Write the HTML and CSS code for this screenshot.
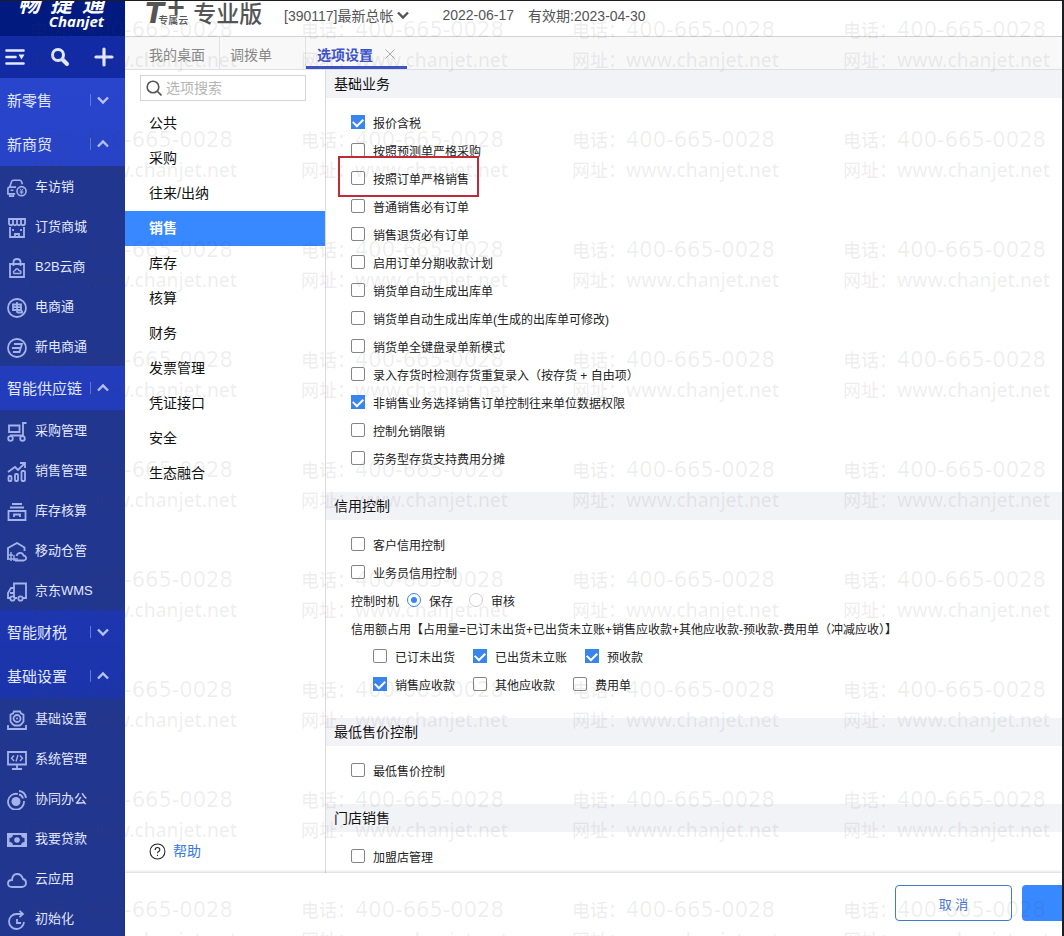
FILE: index.html
```html
<!DOCTYPE html>
<html lang="zh-CN">
<head>
<meta charset="utf-8">
<meta name="viewport" content="width=device-width, initial-scale=1">
<title>选项设置</title>
<link rel="stylesheet" href="styles.css">
<script src="watermark.js" defer></script>
</head>
<body>
<div class="app">
  <aside class="sidebar">
    <div class="brand">
      <div class="brand-cn"><span>畅</span><span>捷</span><span>通</span></div>
      <div class="brand-en">Chanjet</div>
    </div>
    <div class="tools">
      <button type="button" aria-label="菜单"><svg viewBox="0 0 20 20"><path d="M1.5 3.500h17M1.500 10h9M1.500 16.500h17" class="thick"/><path d="M13.500 7.500h6l-3 5z" class="solid"/></svg></button>
      <button type="button" aria-label="搜索"><svg viewBox="0 0 20 20"><circle cx="8" cy="8" r="5.500" stroke-width="3"/><path d="M12.500 12.500l4.500 4.500" stroke-width="4"/></svg></button>
      <button type="button" aria-label="新增"><svg viewBox="0 0 20 20"><path d="M10 2v16M2 10h16" stroke-width="3.200"/></svg></button>
    </div>
    <nav class="nav">
      <button type="button" class="group"><span>新零售</span><svg class="chev" viewBox="0 0 12 12"><path d="M1 3.500l5 5 5-5"/></svg></button>
      <button type="button" class="group"><span>新商贸</span><svg class="chev" viewBox="0 0 12 12"><path d="M1 8.500l5-5 5 5"/></svg></button>
      <div class="items">
        <a href="#"><svg viewBox="0 0 22 20"><path d="M3 9l2-6q.4-1.500 2-1.500h7q1.500 0 2 1.500l1 3M10 9H3Q1 9 1 11v5.500h8M3 16.500V19h4v-2.500M4 12.500h3"/><circle cx="16" cy="13.500" r="5"/><path d="M14 10.500l2 2.500 2-2.500M16 13v4M14 13.500h4M14 15.200h4" class="thin"/></svg><span>车访销</span></a>
        <a href="#"><svg viewBox="0 0 20 20"><path d="M2 1h16v5q-1.500 2.500-4 0-2 2.500-4 0-2 2.500-4 0-2.500 2.500-4 0zM6 1v5M10 1v5M14 1v5M3 9v10h14V9M8 19v-3h4v3M6 11v2M14 11v2"/></svg><span>订货商城</span></a>
        <a href="#"><svg viewBox="0 0 20 20"><path d="M3 6h14v13H3zM6.500 8V4q0-3 3.500-3t3.500 3v4"/><path d="M7 15.500q-1.500-2 .8-2.800Q10 9 12 12.500q3 .5 1.500 3z" class="mid"/></svg><span>B2B云商</span></a>
        <a href="#"><svg viewBox="0 0 20 20"><circle cx="10" cy="10" r="9"/><path d="M6 6.500h8v5.500H6zM6 9.200h8M10 4v9.500q0 1 1 1h4v-2"/></svg><span>电商通</span></a>
        <a href="#"><svg viewBox="0 0 20 20"><circle cx="10" cy="10" r="9"/><path d="M7 6h8l-2.500 8H6M5 10h8.500"/></svg><span>新电商通</span></a>
      </div>
      <button type="button" class="group"><span>智能供应链</span><svg class="chev" viewBox="0 0 12 12"><path d="M1 8.500l5-5 5 5"/></svg></button>
      <div class="items">
        <a href="#"><svg viewBox="0 0 20 20"><path d="M2 3.500h10.500V10H2zM19.500 1H16v12.500H3"/><circle cx="3.500" cy="16.500" r="2.300"/><circle cx="15.500" cy="16.500" r="2.300"/></svg><span>采购管理</span></a>
        <a href="#"><svg viewBox="0 0 20 20"><path d="M1 10l7-5 3 3 7-7M13 1h5v5"/><rect x="1.500" y="14" width="3" height="5" rx="1"/><rect x="8" y="12" width="3" height="7" rx="1"/><rect x="14.500" y="9" width="3.500" height="10" rx="1"/></svg><span>销售管理</span></a>
        <a href="#"><svg viewBox="0 0 20 20"><path d="M5 2h10M3 5.500h14M1.500 9h17v9h-17zM7 15v-2.500h6V15"/></svg><span>库存核算</span></a>
        <a href="#"><svg viewBox="0 0 20 20"><path d="M1 18V6l9-5 7.500 4.500V9"/><path d="M8 18.500h8.500q3-.5 2.500-3-.5-2-2.500-2-1-3-4-2.500-2.500.5-3 3"/><path d="M4 10v9M7 13v6M2 17h7M2 13h4M10 16v3" class="mid"/></svg><span>移动仓管</span></a>
        <a href="#"><svg viewBox="0 0 20 20"><path d="M7 16V1.500h12V16h-3M7 6H4L1 11v5h2M3 11h4M8 16h2"/><circle cx="5.500" cy="16.500" r="2.200"/><circle cx="13.500" cy="16.500" r="2.200"/></svg><span>京东WMS</span></a>
      </div>
      <button type="button" class="group"><span>智能财税</span><svg class="chev" viewBox="0 0 12 12"><path d="M1 3.500l5 5 5-5"/></svg></button>
      <button type="button" class="group"><span>基础设置</span><svg class="chev" viewBox="0 0 12 12"><path d="M1 8.500l5-5 5 5"/></svg></button>
      <div class="items">
        <a href="#"><svg viewBox="0 0 20 20"><path d="M7 1.500h6l1 2 2.500 1v7l-2 2.500-2 1.500h-5l-2-1.500-2-2.500v-7L6 3.500zM1 15v4h18v-4"/><circle cx="10" cy="8.500" r="3.500"/><circle cx="10" cy="8.500" r="1" class="solid"/></svg><span>基础设置</span></a>
        <a href="#"><svg viewBox="0 0 20 20"><path d="M1 2h18v12.500H1zM10 14.500V18M5 19h10"/><path d="M7 5.500L4.500 8.200 7 11M13 5.500l2.500 2.700L13 11M11 5l-2 6.500" class="mid"/></svg><span>系统管理</span></a>
        <a href="#"><svg viewBox="0 0 20 20"><path d="M11 4a8 8 0 1 0 6 7M12 1q6 .5 7 7M12 4.500q3 .5 4 4"/><circle cx="9" cy="11.500" r="4.500" class="solid"/></svg><span>协同办公</span></a>
        <a href="#"><svg viewBox="0 0 20 20"><path fill-rule="evenodd" class="solid" d="M0 3h20v14H0zM6 5Q5.500 8 2.500 8v4q3 0 3.500 3h8q.5-3 3.500-3V8q-3 0-3.500-3z"/><circle cx="10" cy="10" r="2.800" class="solid"/></svg><span>我要贷款</span></a>
        <a href="#"><svg viewBox="0 0 20 20"><path d="M5 17q-4 0-4-3.500T5 10q.5-6 5-6t6 5q3 .5 3 4t-4 4z"/></svg><span>云应用</span></a>
        <a href="#"><svg viewBox="0 0 20 20"><path d="M16 4H9.500A7.500 7.500 0 1 0 17 12M12.500.8L16 4l-3.500 3.200M10 9v4h4"/></svg><span>初始化</span></a>
      </div>
    </nav>
  </aside>

  <div class="main">
    <header class="topbar">
      <div class="product"><span class="product-t">T<sup>+</sup></span><span class="product-sub">专属云</span><span class="product-name">专业版</span></div>
      <button type="button" class="account">[390117]最新总帐<svg viewBox="0 0 12 12"><path d="M1 3.500l5 5 5-5"/></svg></button>
      <span class="date">2022-06-17</span>
      <span>有效期:2023-04-30</span>
    </header>
    <div class="tabs">
      <button type="button" class="tab">我的桌面</button>
      <button type="button" class="tab last">调拨单</button>
      <button type="button" class="tab active">选项设置<svg viewBox="0 0 10 10"><path d="M.5.5l9 9M9.500.5l-9 9"/></svg></button>
    </div>
    <div class="workspace">
      <nav class="menu">
        <label class="search"><svg viewBox="0 0 16 16"><circle cx="7" cy="7" r="5.800"/><path d="M11 11l4.500 4.500"/></svg><input type="text" placeholder="选项搜索" aria-label="选项搜索"></label>
        <a href="#">公共</a>
        <a href="#">采购</a>
        <a href="#">往来/出纳</a>
        <a href="#" class="current">销售</a>
        <a href="#">库存</a>
        <a href="#">核算</a>
        <a href="#">财务</a>
        <a href="#">发票管理</a>
        <a href="#">凭证接口</a>
        <a href="#">安全</a>
        <a href="#">生态融合</a>
        <a href="#" class="help"><svg viewBox="0 0 16 16"><circle cx="8" cy="8" r="7"/><path d="M5.800 6.500q0-2.200 2.200-2.200t2.200 2q0 1.200-1.200 1.700-1 .6-1 1.700M8 11v1.300"/></svg>帮助</a>
      </nav>
      <main class="content">
        <section>
          <h2>基础业务</h2>
          <div class="rows">
            <div class="row"><label><input type="checkbox" checked>报价含税</label></div>
            <div class="row"><label><input type="checkbox">按照预测单严格采购</label></div>
            <div class="row"><label class="marked"><input type="checkbox">按照订单严格销售</label></div>
            <div class="row"><label><input type="checkbox">普通销售必有订单</label></div>
            <div class="row"><label><input type="checkbox">销售退货必有订单</label></div>
            <div class="row"><label><input type="checkbox">启用订单分期收款计划</label></div>
            <div class="row"><label><input type="checkbox">销货单自动生成出库单</label></div>
            <div class="row"><label><input type="checkbox">销货单自动生成出库单(生成的出库单可修改)</label></div>
            <div class="row"><label><input type="checkbox">销货单全键盘录单新模式</label></div>
            <div class="row"><label><input type="checkbox">录入存货时检测存货重复录入（按存货 + 自由项）</label></div>
            <div class="row"><label><input type="checkbox" checked>非销售业务选择销售订单控制往来单位数据权限</label></div>
            <div class="row"><label><input type="checkbox">控制允销限销</label></div>
            <div class="row"><label><input type="checkbox">劳务型存货支持费用分摊</label></div>
          </div>
        </section>
        <section>
          <h2>信用控制</h2>
          <div class="rows">
            <div class="row"><label><input type="checkbox">客户信用控制</label></div>
            <div class="row"><label><input type="checkbox">业务员信用控制</label></div>
            <div class="row timing"><span>控制时机</span><label><input type="radio" name="timing" checked>保存</label><label><input type="radio" name="timing">审核</label></div>
            <div class="row">信用额占用【占用量=已订未出货+已出货未立账+销售应收款+其他应收款-预收款-费用单（冲减应收）】</div>
            <div class="row nested"><label><input type="checkbox">已订未出货</label><label><input type="checkbox" checked>已出货未立账</label><label><input type="checkbox" checked>预收款</label></div>
            <div class="row nested"><label><input type="checkbox" checked>销售应收款</label><label><input type="checkbox">其他应收款</label><label><input type="checkbox">费用单</label></div>
          </div>
        </section>
        <section>
          <h2>最低售价控制</h2>
          <div class="rows">
            <div class="row"><label><input type="checkbox">最低售价控制</label></div>
          </div>
        </section>
        <section>
          <h2>门店销售</h2>
          <div class="rows">
            <div class="row"><label><input type="checkbox">加盟店管理</label></div>
          </div>
        </section>
      </main>
    </div>
    <footer class="actions">
      <button type="button" class="cancel">取 消</button>
      <button type="button" class="confirm" aria-label="确定"></button>
    </footer>
  </div>
  <div class="watermark" aria-hidden="true"></div>
</div>
</body>
</html>
```

FILE: styles.css
```css
* { box-sizing: border-box; }
body {
  margin: 0;
  font-family: "Liberation Sans", "Noto Sans CJK SC", sans-serif;
  font-size: 14px;
  color: #222;
}
button { font: inherit; color: inherit; border: 0; padding: 0; background: none; cursor: pointer; }
a { color: inherit; text-decoration: none; }
svg { flex: none; fill: none; stroke: currentColor; }

.app {
  position: relative;
  display: flex;
  height: 100vh;
  overflow: hidden;
  background: #fff;
  border-top: 1px solid #1d1d22;
  border-right: 2px solid #1d1d22;
}

/* Sidebar */
.sidebar {
  flex: none;
  display: flex;
  flex-direction: column;
  width: 125px;
  overflow: hidden;
  background: #21368f;
  color: #e3e9ff;
}
.brand {
  flex: none;
  display: flex;
  flex-direction: column;
  justify-content: flex-end;
  align-items: flex-end;
  height: 35px;
  padding: 0 21px 8px 0;
  overflow: hidden;
  background: #001a80;
  color: #fff;
  font-style: italic;
  font-weight: 700;
}
.brand-cn { display: flex; gap: 10px; font-size: 22px; line-height: 18px; }
.brand-en { font-family: "Open Sans", sans-serif; font-size: 15px; line-height: 14px; }
.tools {
  flex: none;
  display: flex;
  justify-content: space-between;
  align-items: center;
  height: 42px;
  padding: 0 11px 0 5px;
  background: #122aa3;
}
.tools button { display: flex; }
.tools svg { width: 20px; height: 20px; stroke-linecap: round; }
.thick { stroke-width: 2.6; }
.thin { stroke-width: 1; }
.mid { stroke-width: 1.4; }
.solid { fill: currentColor; stroke: none; }
.nav { display: flex; flex-direction: column; background: linear-gradient(#2945cc, #1b34ab 620px); }
.group {
  flex: none;
  display: flex;
  justify-content: space-between;
  align-items: center;
  height: 44px;
  padding: 0 16px 1px 7px;
  font-size: 15px;
  text-align: left;
}
.chev {
  width: 19px;
  height: 12px;
  padding-left: 6px;
  border-left: 1px solid #5f78dc;
  color: #b4c2f4;
  stroke-width: 2.4;
}
.items { background: #21368f; }
.items a { display: flex; align-items: center; gap: 8px; height: 40px; padding: 0 0 2px 7px; font-size: 13px; }
.items svg { width: 20px; height: 20px; margin-top: 6px; color: #a4b3e8; stroke-width: 1.8; }

/* Header */
.main { flex: 1; min-width: 0; display: flex; flex-direction: column; }
.topbar {
  flex: none;
  display: flex;
  align-items: center;
  height: 35px;
  padding: 0 20px 8px;
  overflow: hidden;
  color: #555;
  white-space: nowrap;
}
.product { display: flex; align-items: flex-end; width: 139px; height: 23px; font-weight: 700; }
.product-t { font-family: "DejaVu Sans", sans-serif; font-size: 28px; line-height: 24px; font-style: italic; }
.product-t sup { margin-left: 2px; font-size: 24px; line-height: 10px; vertical-align: 8px; }
.product-sub { margin-left: -28px; font-size: 10px; line-height: 10px; font-weight: 500; }
.product-name { margin-left: 5px; font-size: 23px; line-height: 24px; font-weight: 500; }
.account { display: flex; align-items: center; gap: 4px; }
.account svg { width: 12px; height: 12px; stroke-width: 2.4; }
.date { margin: 0 14px 0 33px; }

.tabs {
  flex: none;
  display: flex;
  height: 34px;
  padding-left: 14px;
  background: #f8f8f8;
  border-top: 1px solid #d2d2d2;
  border-bottom: 1px solid #dedfe3;
  color: #888;
}
.tab { padding: 2px 14px 0 10px; border-right: 1px solid #e2e2e2; }
.tab.last { padding-right: 33px; }
.tab.active {
  display: flex;
  align-items: center;
  gap: 12px;
  padding: 4px 12px 0 11px;
  border-right: 0;
  border-bottom: 3px solid #3d53c9;
  color: #3d53c9;
  font-weight: 700;
}
.tab.active svg { width: 10px; height: 10px; color: #aaa; }

/* Settings menu */
.workspace { flex: 1; min-height: 0; display: flex; }
.menu { flex: none; display: flex; flex-direction: column; width: 201px; padding-top: 5px; border-right: 1px solid #d9dbe0; color: #111; }
.menu a { flex: none; height: 35px; padding-left: 24px; line-height: 35px; }
.menu .current { background: #3888ff; color: #fff; font-weight: 700; }
.search {
  flex: none;
  display: flex;
  align-items: center;
  gap: 4px;
  height: 26px;
  margin: 0 19px 5px 15px;
  padding-left: 5px;
  border: 1px solid #d5d5d5;
}
.search svg { width: 16px; height: 16px; color: #555; stroke-width: 1.6; }
.search input { flex: 1; min-width: 0; padding: 0; border: 0; outline: 0; background: none; font: inherit; }
.search input::placeholder { color: #b5b5b5; }
.menu .help { display: flex; align-items: center; gap: 7px; margin-top: auto; margin-bottom: 4px; color: #3878e0; }
.help svg { width: 17px; height: 17px; color: #222; }

/* Options */
.content { flex: 1; min-width: 0; overflow: hidden; }
h2 { margin: 0; padding-left: 8px; background: #f2f3f7; font-size: 14px; line-height: 28px; font-weight: 400; color: #111; }
.rows { padding: 10px 0 20px 25px; font-size: 12px; }
.row { display: flex; align-items: center; gap: 18px; height: 28px; white-space: nowrap; }
.row label { position: relative; display: flex; align-items: center; gap: 8px; }
.nested { padding-left: 22px; }
.timing { gap: 16px; }
.timing span { margin-right: -8px; }
.row input {
  appearance: none;
  flex: none;
  display: grid;
  place-items: center;
  width: 14px;
  height: 14px;
  margin: 0;
  border: 1px solid #858585;
  border-radius: 2px;
  background: #fff;
}
.row input[type="checkbox"]:checked { border-color: #3a84ee; border-radius: 0; background: #3a84ee; }
.row input[type="checkbox"]:checked::after {
  content: "";
  width: 8px;
  height: 5px;
  margin-bottom: 2px;
  border: solid #fff;
  border-width: 0 0 2px 2px;
  transform: rotate(-45deg);
}
.row input[type="radio"] { border-color: #ccc; border-radius: 50%; }
.row input[type="radio"]:checked { border-color: #3a84ee; }
.row input[type="radio"]:checked::after { content: ""; width: 6px; height: 6px; border-radius: 50%; background: #3a84ee; }
.marked::after {
  content: "";
  position: absolute;
  inset: -14px -10px -10px -13px;
  border: 2px solid #bf2c36;
  pointer-events: none;
}

/* Footer */
.actions {
  flex: none;
  display: flex;
  justify-content: flex-end;
  gap: 10px;
  height: 63px;
  padding-top: 12px;
  background: #fff;
  box-shadow: 0 -1px 3px rgba(0, 0, 0, 0.18);
  z-index: 1;
}
.actions button { height: 36px; font-size: 13px; }
.cancel { width: 117px; border: 1px solid #3f7cc9; border-radius: 4px; color: #4a78d0; }
.confirm { width: 40px; border-radius: 4px 0 0 4px; background: #3888ff; }

/* Repeating contact watermark laid over the whole window */
.watermark {
  position: absolute;
  inset: 14px 0 0 30px;
  z-index: 2;
  display: grid;
  grid-template-columns: repeat(4, 271px);
  grid-auto-rows: 110px;
  overflow: hidden;
  pointer-events: none;
  color: rgba(70, 70, 70, 0.09);
  font-family: "Noto Sans", "Noto Sans CJK SC", sans-serif;
  font-size: 18px;
  line-height: 30px;
  white-space: nowrap;
}
.watermark p { margin: 0; height: 30px; display: flex; font-weight: 500; }
.watermark .url { font-size: 19px; }
.watermark .phone { font-family: "DejaVu Sans", sans-serif; font-size: 21px; }
```

FILE: watermark.js
```js
const layer = document.querySelector('.watermark');
const tile = '<div><p>电话：<span class="phone">400-665-0028</span></p><p>网址：<span class="url">www.chanjet.net</span></p></div>';
const rows = Math.ceil(layer.clientHeight / 110);
layer.innerHTML = tile.repeat(rows * 4);
```
